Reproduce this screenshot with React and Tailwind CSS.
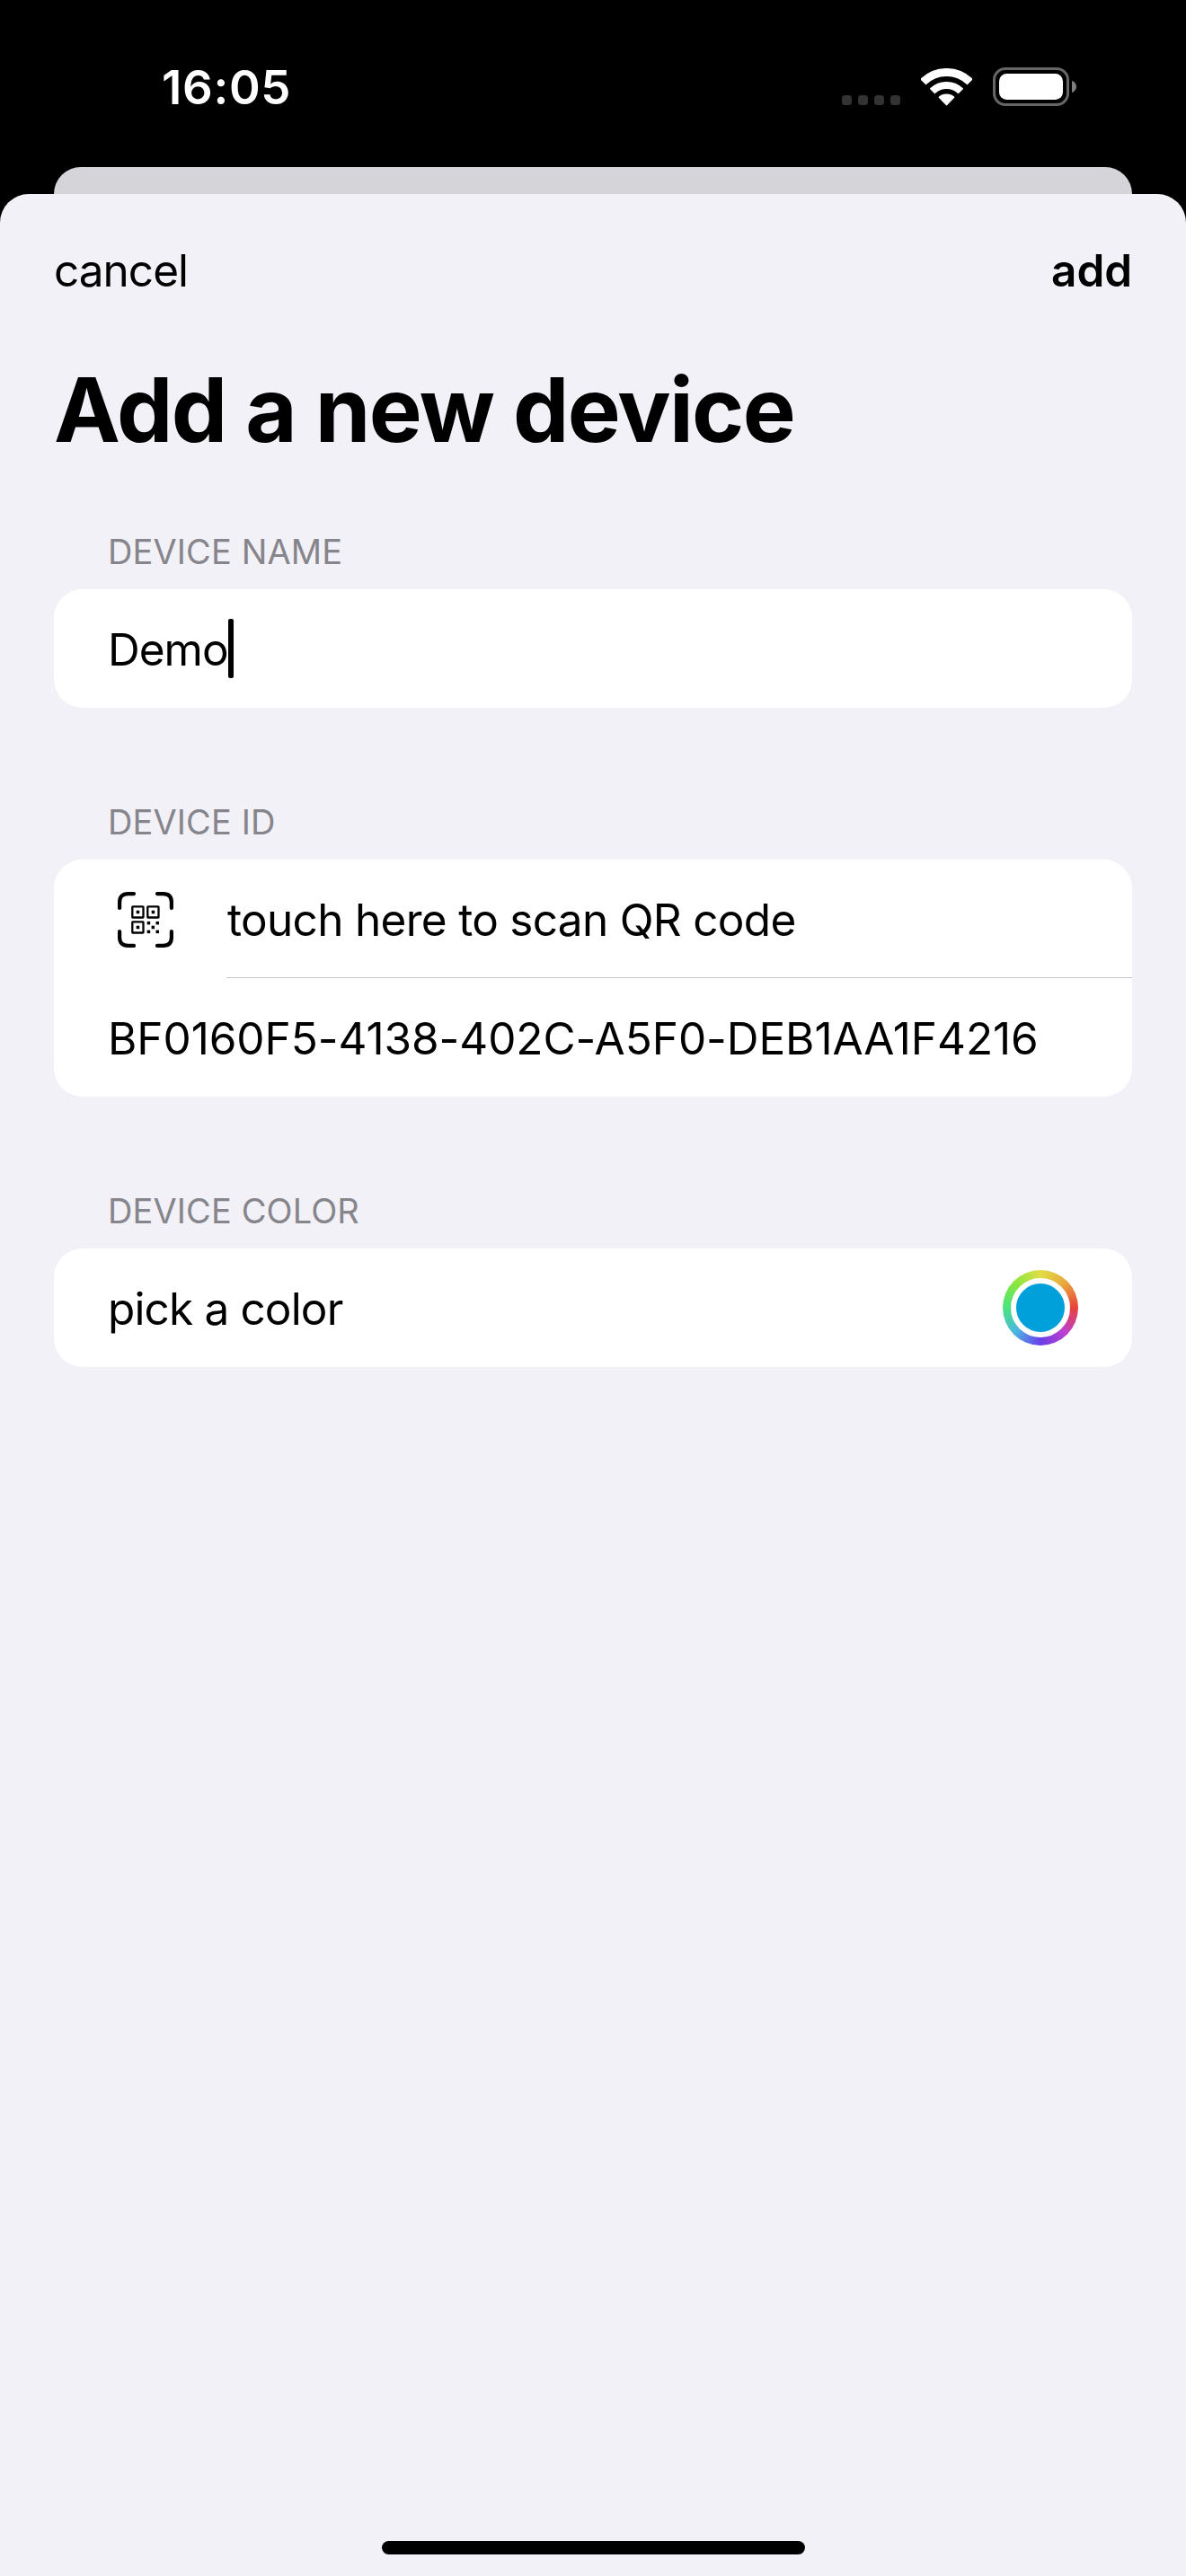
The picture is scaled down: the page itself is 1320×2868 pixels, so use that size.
function wedge(outer, inner) {
  const cx = 28.5;
  const cy = 41.5;
  const k = Math.SQRT1_2;
  const p = (r, side, inset) => `${cx + side * (r * k - inset)} ${cy - r * k - inset}`;
  if (!inner) return `M${cx} ${cy - 0.8}L${p(outer, -1, 0.5)}A${outer} ${outer} 0 0 1 ${p(outer, 1, 0.5)}Z`;
  return `M${p(inner, -1, 0.5)}L${p(outer, -1, 0.5)}A${outer} ${outer} 0 0 1 ${p(outer, 1, 0.5)}L${p(inner, 1, 0.5)}A${inner} ${inner} 0 0 0 ${p(inner, -1, 0.5)}Z`;
}

function WifiIcon() {
  return (
    <svg className="h-[42px] w-[57px]" viewBox="0 0 57 42" fill="white" stroke="white" strokeWidth="1.4" strokeLinejoin="round">
      <path d={wedge(40.8, 33.2)} />
      <path d={wedge(25.9, 19.1)} />
      <path d={wedge(12.3)} />
    </svg>
  );
}

function BatteryIcon() {
  return (
    <svg className="h-[43px] w-[93px]" viewBox="0 0 93 43" fill="none">
      <rect x="1.5" y="1.5" width="82" height="40" rx="12.5" stroke="#666" strokeWidth="3" />
      <rect x="7" y="7" width="71" height="29" rx="8.5" fill="white" />
      <path d="M88 14.7c3 1.3 5 3.8 5 6.8s-2 5.5-5 6.8z" fill="#808080" />
    </svg>
  );
}

function ScanIcon() {
  return (
    <svg className="mt-[2px] h-[62px] w-[62px]" viewBox="0 0 62 62" fill="none" stroke="black">
      <path
        d="M2.1 18V11.5Q2.1 2.1 11.5 2.1H18M44 2.1H50.5Q59.9 2.1 59.9 11.5V18M59.9 44V50.5Q59.9 59.9 50.5 59.9H44M18 59.9H11.5Q2.1 59.9 2.1 50.5V44"
        strokeWidth="4.2"
        strokeLinecap="round"
      />
      <g strokeWidth="2.3">
        <rect x="16.3" y="16.3" width="12.2" height="12.2" rx="0.5" />
        <rect x="33.3" y="16.3" width="12.2" height="12.2" rx="0.5" />
        <rect x="16.3" y="33.3" width="12.2" height="12.2" rx="0.5" />
      </g>
      <g fill="black" stroke="none">
        <rect x="20.7" y="20.7" width="3.5" height="3.5" />
        <rect x="37.7" y="20.7" width="3.5" height="3.5" />
        <rect x="20.7" y="37.7" width="3.5" height="3.5" />
        <rect x="32.7" y="32.9" width="3.5" height="3.5" />
        <rect x="42.5" y="32.9" width="3.5" height="3.5" />
        <rect x="37.6" y="37.7" width="3.5" height="3.5" />
        <rect x="32.7" y="42.6" width="3.5" height="3.5" />
        <rect x="42.5" y="42.6" width="3.5" height="3.5" />
      </g>
    </svg>
  );
}

function StatusBar() {
  return (
    <div className="flex h-[186px] items-center pt-[7px] pr-[122px] pl-[180px] text-white">
      <span className="pt-px text-[52.7px] leading-[60px] font-semibold tracking-[0.7px]">16:05</span>
      <div className="ml-auto flex items-center">
        <div className="mt-[30px] mr-[23px] flex gap-[7px]">
          {[0, 1, 2, 3].map((i) => (
            <span key={i} className="size-[11px] rounded-[3.5px] bg-[#333]" />
          ))}
        </div>
        <WifiIcon />
        <div className="ml-[23px]">
          <BatteryIcon />
        </div>
      </div>
    </div>
  );
}

function Section({ label, children }) {
  return (
    <section>
      <h2 className="flex h-[84px] items-center pl-[60px] text-[38px] leading-[46px] font-normal tracking-[0.1px] text-[#86858b]">{label}</h2>
      <div className="rounded-[32px] bg-white">{children}</div>
    </section>
  );
}

export default function App() {
  return (
    <div className="flex h-[2868px] w-[1320px] flex-col overflow-hidden bg-black font-['Inter',sans-serif] text-[49.5px] leading-[60px] whitespace-nowrap text-black">
      <StatusBar />
      <div className="mx-[60px] h-[30px] rounded-t-[30px] bg-[#d5d4d9]" />
      <main className="flex flex-1 flex-col rounded-t-[32px] bg-[#f2f1f7] px-[60px]">
        <div className="flex h-[170px] items-center justify-between">
          <button className="tracking-[-0.98px]">cancel</button>
          <button className="font-semibold tracking-[-0.1px]">add</button>
        </div>
        <h1 className="text-[99px] leading-[140px] font-bold tracking-[-1.67px]">Add a new device</h1>
        <div className="mt-[46px] flex flex-col gap-[85px]">
          <Section label="DEVICE NAME">
            <div className="flex h-[132px] items-center px-[60px]">
              <span className="pt-[2px] tracking-[-1px]">Demo</span>
              <span className="h-[66px] w-[6px] rounded-[2px] bg-black" />
            </div>
          </Section>
          <Section label="DEVICE ID">
            <div className="flex h-[132px] items-center pl-[71px]">
              <ScanIcon />
              <div className="ml-[59px] flex h-full flex-1 items-center border-b border-[#c6c6c8]">
                <span className="pt-[3px] pl-px tracking-[-0.7px]">touch here to scan QR code</span>
              </div>
            </div>
            <div className="flex h-[132px] items-center px-[60px] pt-[2px] tracking-[-0.06px]">BF0160F5-4138-402C-A5F0-DEB1AA1F4216</div>
          </Section>
          <Section label="DEVICE COLOR">
            <div className="flex h-[132px] items-center justify-between px-[60px]">
              <span className="pt-[2px] tracking-[-0.85px]">pick a color</span>
              <div className="flex size-[84px] items-center justify-center rounded-full bg-[conic-gradient(#e2de46,#e8a83e,#e8423c,#bd40d0,#6a3ee8,#4cb4e4,#4ae47e,#8ae63e,#e2de46)]">
                <div className="size-[66px] rounded-full border-[6px] border-white bg-[#00a0da]" />
              </div>
            </div>
          </Section>
        </div>
        <div className="mt-auto mb-[24px] h-[15px] w-[471px] self-center rounded-full bg-black" />
      </main>
    </div>
  );
}
